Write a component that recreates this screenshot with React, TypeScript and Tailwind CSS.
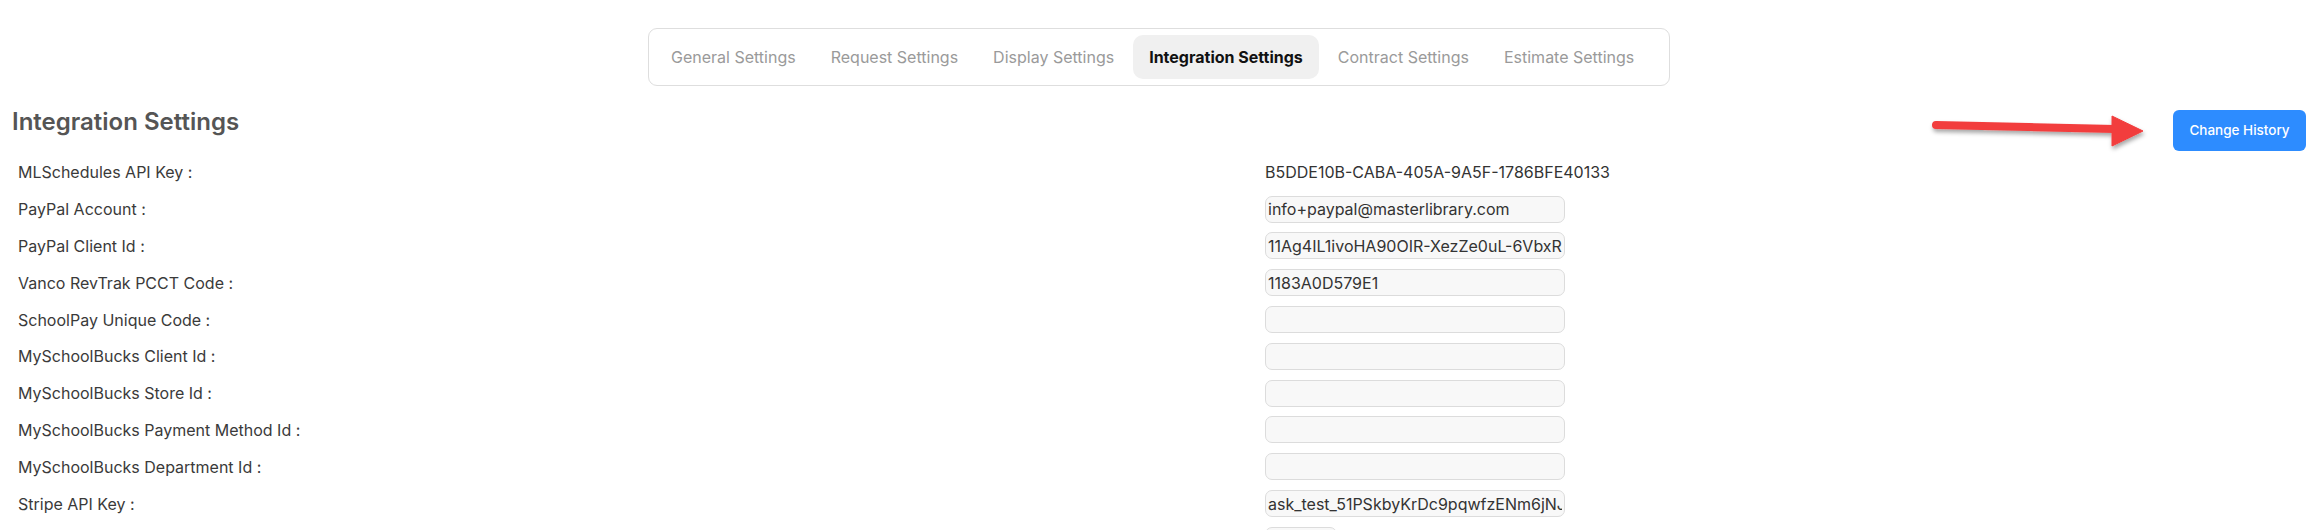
import React from "react";

const TABS = [
  "General Settings",
  "Request Settings",
  "Display Settings",
  "Integration Settings",
  "Contract Settings",
  "Estimate Settings",
];
const ACTIVE_TAB = "Integration Settings";

type Row = { label: string; value?: string; plain?: boolean; small?: boolean };

const ROWS: Row[] = [
  { label: "MLSchedules API Key :", value: "B5DDE10B-CABA-405A-9A5F-1786BFE40133", plain: true },
  { label: "PayPal Account :", value: "info+paypal@masterlibrary.com" },
  { label: "PayPal Client Id :", value: "11Ag4IL1ivoHA90OIR-XezZe0uL-6VbxRkQ2mTz" },
  { label: "Vanco RevTrak PCCT Code :", value: "1183A0D579E1" },
  { label: "SchoolPay Unique Code :", value: "" },
  { label: "MySchoolBucks Client Id :", value: "" },
  { label: "MySchoolBucks Store Id :", value: "" },
  { label: "MySchoolBucks Payment Method Id :", value: "" },
  { label: "MySchoolBucks Department Id :", value: "" },
  { label: "Stripe API Key :", value: "ask_test_51PSkbyKrDc9pqwfzENm6jNJxQ7" },
  { label: "", value: "", small: true },
];

function RedArrow() {
  return (
    <svg
      className="pointer-events-none absolute left-[1925px] top-[108px]"
      width="230"
      height="50"
      viewBox="0 0 230 50"
      aria-hidden="true"
    >
      <defs>
        <filter id="arrowShadow" x="-10%" y="-50%" width="120%" height="200%">
          <feDropShadow dx="1" dy="3" stdDeviation="2" floodColor="#000" floodOpacity="0.35" />
        </filter>
      </defs>
      <g filter="url(#arrowShadow)" fill="#f23d3d" stroke="#f23d3d">
        <line x1="11" y1="17" x2="190" y2="21" strokeWidth="8" strokeLinecap="round" />
        <polygon points="187,8 218,23 187,38" strokeWidth="1" strokeLinejoin="round" />
      </g>
    </svg>
  );
}

export default function App() {
  return (
    <div className="relative h-[530px] w-full overflow-hidden bg-white font-['Inter',sans-serif] text-[16px] text-[#333]">
      <div className="flex justify-center pt-[28px]">
        <div className="ml-[7px] flex h-[58px] w-[1022px] items-center gap-[3px] rounded-[9px] border border-[#dedede] bg-white pl-[6px]">
          {TABS.map((tab) => {
            const isActive = tab === ACTIVE_TAB;
            return (
              <div
                key={tab}
                className={
                  isActive
                    ? "flex h-[44px] items-center rounded-[10px] bg-[#f0f0f0] px-[16px] font-bold text-[#111]"
                    : "flex h-[44px] items-center px-[16px] text-[#9a9a9a]"
                }
              >
                {tab}
              </div>
            );
          })}
        </div>
      </div>

      <div className="mt-[20px] flex items-start justify-between pl-[12px] pr-[5px]">
        <h2 className="text-[24px] font-semibold leading-[32px] text-[#555]">Integration Settings</h2>
        <button
          type="button"
          className="mt-[4px] h-[41px] w-[133px] rounded-[6px] bg-[#2d8cff] text-[13.5px] font-medium text-white"
        >
          Change History
        </button>
      </div>

      <div className="mt-[3px] pl-[18px]">
        {ROWS.map((row, i) => (
          <div key={i} className="flex h-[36.8px] items-center">
            <div className="w-[1247px] shrink-0 leading-[20px] text-[#3a3a3a]">{row.label}</div>
            {row.plain ? (
              <div className="leading-[20px]">{row.value}</div>
            ) : (
              <input
                readOnly
                value={row.value}
                className={
                  (row.small ? "w-[72px] " : "w-[300px] ") +
                  "h-[27px] rounded-[7px] border border-[#dcdcdc] bg-[#f8f8f8] px-[2px] text-[16px] text-[#333] outline-none"
                }
              />
            )}
          </div>
        ))}
      </div>

      <RedArrow />
    </div>
  );
}
